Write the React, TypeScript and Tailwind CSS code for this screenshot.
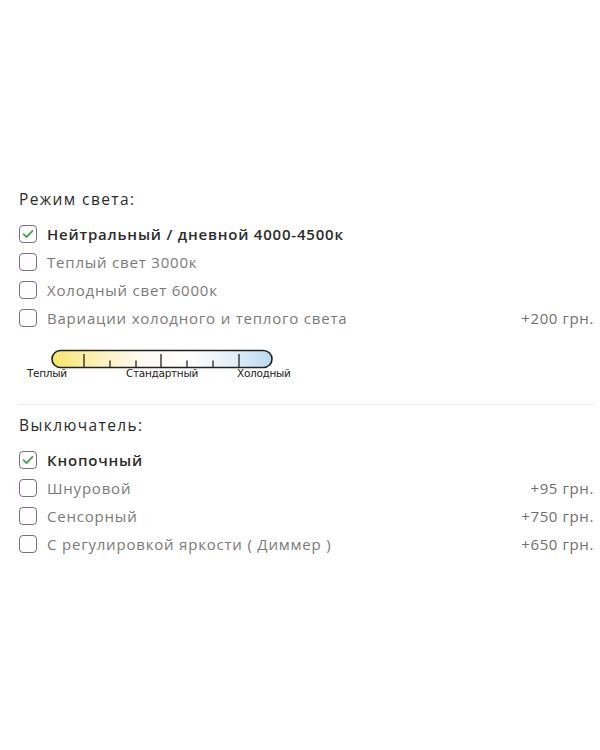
import React from "react";

type Option = { label: string; price?: string; checked?: boolean };

const lightModes: Option[] = [
  { label: "Нейтральный / дневной 4000-4500к", checked: true },
  { label: "Теплый свет 3000к" },
  { label: "Холодный свет 6000к" },
  { label: "Вариации холодного и теплого света", price: "+200 грн." },
];

const switches: Option[] = [
  { label: "Кнопочный", checked: true },
  { label: "Шнуровой", price: "+95 грн." },
  { label: "Сенсорный", price: "+750 грн." },
  { label: "С регулировкой яркости ( Диммер )", price: "+650 грн." },
];

function Box({ checked }: { checked?: boolean }) {
  return (
    <span className="flex h-[18px] w-[18px] shrink-0 items-center justify-center rounded-[4px] border-[1.5px] border-[#7d6b88] bg-white">
      {checked && (
        <svg width="12" height="10" viewBox="0 0 12 10" fill="none">
          <path d="M1.5 5.2 L4.5 8 L10.5 1.8" stroke="#43a747" strokeWidth="1.8" strokeLinecap="round" strokeLinejoin="round" />
        </svg>
      )}
    </span>
  );
}

function OptionRow({ o }: { o: Option }) {
  return (
    <div className="flex h-[28px] items-center">
      <Box checked={o.checked} />
      <span
        className={
          "ml-[10px] text-[15px] tracking-[0.8px] " +
          (o.checked ? "font-semibold text-[#2b2b2b]" : "text-[#7a7a7a]")
        }
      >
        {o.label}
      </span>
      {o.price && <span className="ml-auto text-[15px] tracking-[0.6px] text-[#6f6f6f]">{o.price}</span>}
    </div>
  );
}

function Scale() {
  const ticks = [
    { x: 33, long: true },
    { x: 59, long: false },
    { x: 85, long: false },
    { x: 110, long: true },
    { x: 136, long: false },
    { x: 162, long: false },
    { x: 188, long: true },
  ];
  return (
    <div className="relative h-[36px] w-[300px]">
      <svg className="absolute left-[51px] top-0" width="224" height="21" viewBox="0 0 224 21">
        <defs>
          <linearGradient id="temp" x1="0" x2="1" y1="0" y2="0">
            <stop offset="0" stopColor="#f7e66a" />
            <stop offset="0.14" stopColor="#faeda0" />
            <stop offset="0.4" stopColor="#fffaf0" />
            <stop offset="0.62" stopColor="#ffffff" />
            <stop offset="0.82" stopColor="#e3eff9" />
            <stop offset="1" stopColor="#b8d9f0" />
          </linearGradient>
        </defs>
        <rect x="1" y="1.5" width="220" height="17" rx="8.5" fill="url(#temp)" stroke="#222" strokeWidth="1.6" />
        {ticks.map((t, i) => (
          <line key={i} x1={t.x} x2={t.x} y1={t.long ? 5 : 11.5} y2={18.5} stroke="#222" strokeWidth="1.3" />
        ))}
      </svg>
      <span className="absolute left-[27px] top-[19px] text-[10.5px] leading-none text-[#222] [font-family:'DejaVu_Sans',sans-serif] tracking-[-0.3px]">Теплый</span>
      <span className="absolute left-[126px] top-[19px] text-[10.5px] leading-none text-[#222] [font-family:'DejaVu_Sans',sans-serif] tracking-[-0.3px]">Стандартный</span>
      <span className="absolute left-[237px] top-[19px] text-[10.5px] leading-none text-[#222] [font-family:'DejaVu_Sans',sans-serif] tracking-[-0.3px]">Холодный</span>
    </div>
  );
}

export default function App() {
  return (
    <div className="h-[750px] w-[600px] bg-white pl-[19px] pr-[6px] pt-[188px] [font-family:'Open_Sans','Noto_Sans',sans-serif]">
      <h3 className="text-[15.5px] font-medium leading-[22px] tracking-[1.4px] text-[#2a2a2a]">Режим света:</h3>
      <div className="mt-[10px] flex flex-col">
        {lightModes.map((o) => (
          <OptionRow key={o.label} o={o} />
        ))}
      </div>
      <div className="-ml-[19px] mt-[17px]">
        <Scale />
      </div>
      <div className="mt-[19px] h-px bg-[#ececec]" />
      <h3 className="mt-[9px] text-[15.5px] font-medium leading-[22px] tracking-[1.4px] text-[#2a2a2a]">Выключатель:</h3>
      <div className="mt-[10px] flex flex-col">
        {switches.map((o) => (
          <OptionRow key={o.label} o={o} />
        ))}
      </div>
    </div>
  );
}
